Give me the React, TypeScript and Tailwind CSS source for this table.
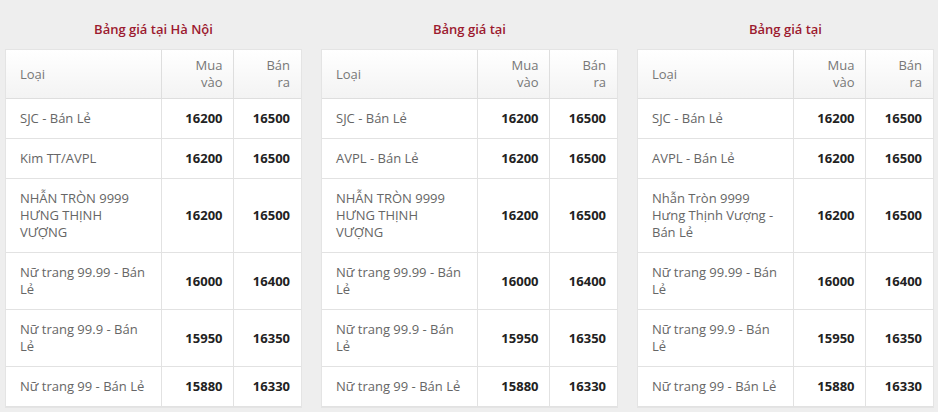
type Row = { name: string; buy: string; sell: string };

const HA_NOI: Row[] = [
  { name: "SJC - Bán Lẻ", buy: "16200", sell: "16500" },
  { name: "Kim TT/AVPL", buy: "16200", sell: "16500" },
  { name: "NHẪN TRÒN 9999 HƯNG THỊNH VƯỢNG", buy: "16200", sell: "16500" },
  { name: "Nữ trang 99.99 - Bán Lẻ", buy: "16000", sell: "16400" },
  { name: "Nữ trang 99.9 - Bán Lẻ", buy: "15950", sell: "16350" },
  { name: "Nữ trang 99 - Bán Lẻ", buy: "15880", sell: "16330" },
];

const SECOND: Row[] = [
  { name: "SJC - Bán Lẻ", buy: "16200", sell: "16500" },
  { name: "AVPL - Bán Lẻ", buy: "16200", sell: "16500" },
  { name: "NHẪN TRÒN 9999 HƯNG THỊNH VƯỢNG", buy: "16200", sell: "16500" },
  { name: "Nữ trang 99.99 - Bán Lẻ", buy: "16000", sell: "16400" },
  { name: "Nữ trang 99.9 - Bán Lẻ", buy: "15950", sell: "16350" },
  { name: "Nữ trang 99 - Bán Lẻ", buy: "15880", sell: "16330" },
];

const THIRD: Row[] = [
  { name: "SJC - Bán Lẻ", buy: "16200", sell: "16500" },
  { name: "AVPL - Bán Lẻ", buy: "16200", sell: "16500" },
  { name: "Nhẫn Tròn 9999 Hưng Thịnh Vượng - Bán Lẻ", buy: "16200", sell: "16500" },
  { name: "Nữ trang 99.99 - Bán Lẻ", buy: "16000", sell: "16400" },
  { name: "Nữ trang 99.9 - Bán Lẻ", buy: "15950", sell: "16350" },
  { name: "Nữ trang 99 - Bán Lẻ", buy: "15880", sell: "16330" },
];

const TABLES = [
  { title: "Bảng giá tại Hà Nội", rows: HA_NOI },
  { title: "Bảng giá tại", rows: SECOND },
  { title: "Bảng giá tại", rows: THIRD },
];

function PriceTable({ title, rows }: { title: string; rows: Row[] }) {
  return (
    <div className="flex flex-col">
      <h3 className="mb-[10px] text-center text-[13px] font-semibold leading-[20px] text-[#9c1a2f]">{title}</h3>
      <div className="border border-[#e4e4e4] bg-white">
        <table className="w-full table-fixed border-collapse text-[13px] leading-[17px]">
          <colgroup>
            <col />
            <col className="w-[72px]" />
            <col className="w-[68px]" />
          </colgroup>
          <thead>
            <tr className="bg-gradient-to-b from-white to-[#f3f3f3] text-[#777]">
              <th className="border-b border-[#dedede] py-[7px] pl-[14px] text-left font-normal">Loại</th>
              <th className="border-b border-l border-[#dedede] py-[7px] pr-[10px] text-right font-normal">
                Mua<br />vào
              </th>
              <th className="border-b border-l border-[#dedede] py-[7px] pr-[11px] text-right font-normal">
                Bán<br />ra
              </th>
            </tr>
          </thead>
          <tbody>
            {rows.map((row, i) => (
              <tr key={i} className="align-middle">
                <td className="border-b border-[#e2e2e2] py-[11px] pl-[14px] pr-[14px] text-[#666]">{row.name}</td>
                <td className="border-b border-l border-[#e2e2e2] py-[11px] pr-[10px] text-right font-bold text-[#222]">
                  {row.buy}
                </td>
                <td className="border-b border-l border-[#e2e2e2] py-[11px] pr-[11px] text-right font-bold text-[#222]">
                  {row.sell}
                </td>
              </tr>
            ))}
          </tbody>
        </table>
      </div>
    </div>
  );
}

export default function App() {
  return (
    <div
      className="min-h-[412px] bg-[#eeeeee] pl-[5px] pr-[4px] pt-[19px]"
      style={{ fontFamily: '"Open Sans", "Noto Sans", sans-serif' }}
    >
      <div className="grid grid-cols-3 gap-[19px]">
        {TABLES.map((t, i) => (
          <PriceTable key={i} title={t.title} rows={t.rows} />
        ))}
      </div>
    </div>
  );
}
